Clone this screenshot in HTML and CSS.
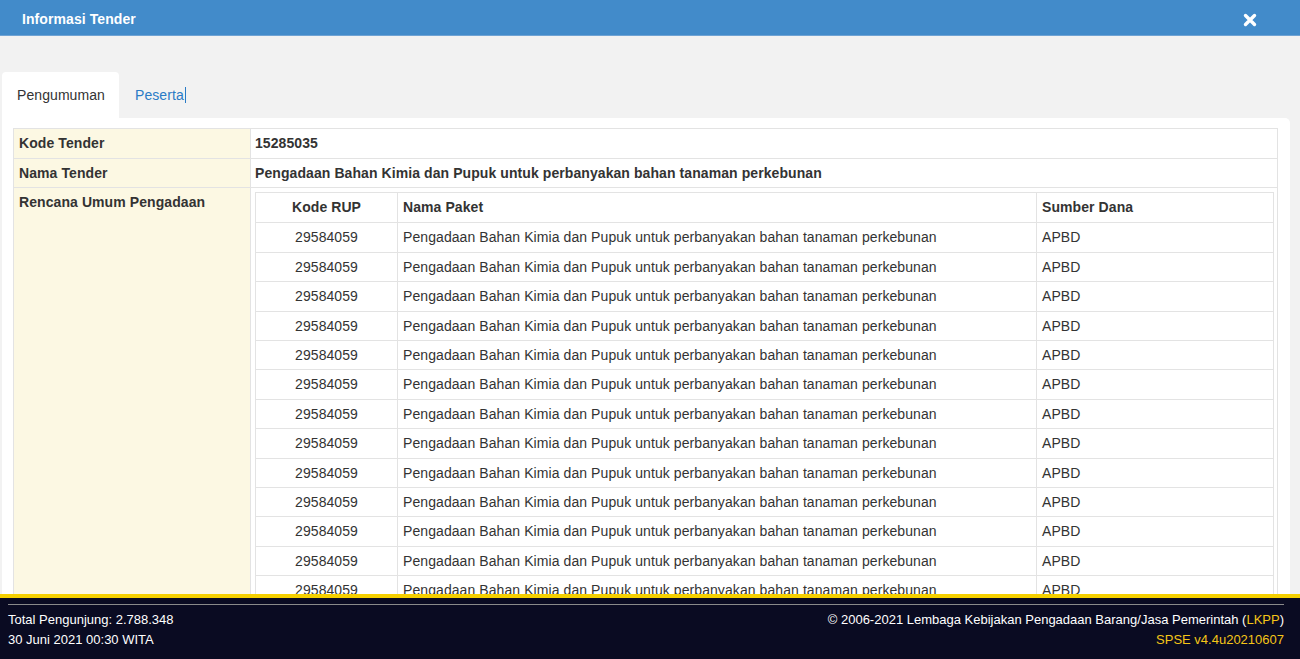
FILE: index.html
```html
<!DOCTYPE html>
<html lang="id">
<head>
<meta charset="utf-8">
<title>Informasi Tender</title>
<link rel="stylesheet" href="styles.css">
</head>
<body>
<div class="modal">
  <div class="modal-header">
    <h4 class="modal-title">Informasi Tender</h4>
    <button class="close" aria-label="Close">
      <svg width="14" height="14" viewBox="0 0 14 14"><path d="M2.5 2.5 L11.5 11.5 M11.5 2.5 L2.5 11.5" stroke="#fff" stroke-width="3.4" stroke-linecap="round"/></svg>
    </button>
  </div>
  <div class="modal-body">
    <ul class="tabs">
      <li class="tab active">Pengumuman</li>
      <li class="tab link">Peserta<span class="caret"></span></li>
    </ul>
    <div class="panel">
      <table class="info">
        <tr><th class="lbl">Kode Tender</th><td class="val"><strong>15285035</strong></td></tr>
        <tr><th class="lbl">Nama Tender</th><td class="val"><strong>Pengadaan Bahan Kimia dan Pupuk untuk perbanyakan bahan tanaman perkebunan</strong></td></tr>
        <tr><th class="lbl">Rencana Umum Pengadaan</th><td class="val nested">
          <table class="rup">
            <tr><th class="c-kode">Kode RUP</th><th class="c-nama">Nama Paket</th><th class="c-dana">Sumber Dana</th></tr>
            <tr><td class="c-kode">29584059</td><td>Pengadaan Bahan Kimia dan Pupuk untuk perbanyakan bahan tanaman perkebunan</td><td>APBD</td></tr>
            <tr><td class="c-kode">29584059</td><td>Pengadaan Bahan Kimia dan Pupuk untuk perbanyakan bahan tanaman perkebunan</td><td>APBD</td></tr>
            <tr><td class="c-kode">29584059</td><td>Pengadaan Bahan Kimia dan Pupuk untuk perbanyakan bahan tanaman perkebunan</td><td>APBD</td></tr>
            <tr><td class="c-kode">29584059</td><td>Pengadaan Bahan Kimia dan Pupuk untuk perbanyakan bahan tanaman perkebunan</td><td>APBD</td></tr>
            <tr><td class="c-kode">29584059</td><td>Pengadaan Bahan Kimia dan Pupuk untuk perbanyakan bahan tanaman perkebunan</td><td>APBD</td></tr>
            <tr><td class="c-kode">29584059</td><td>Pengadaan Bahan Kimia dan Pupuk untuk perbanyakan bahan tanaman perkebunan</td><td>APBD</td></tr>
            <tr><td class="c-kode">29584059</td><td>Pengadaan Bahan Kimia dan Pupuk untuk perbanyakan bahan tanaman perkebunan</td><td>APBD</td></tr>
            <tr><td class="c-kode">29584059</td><td>Pengadaan Bahan Kimia dan Pupuk untuk perbanyakan bahan tanaman perkebunan</td><td>APBD</td></tr>
            <tr><td class="c-kode">29584059</td><td>Pengadaan Bahan Kimia dan Pupuk untuk perbanyakan bahan tanaman perkebunan</td><td>APBD</td></tr>
            <tr><td class="c-kode">29584059</td><td>Pengadaan Bahan Kimia dan Pupuk untuk perbanyakan bahan tanaman perkebunan</td><td>APBD</td></tr>
            <tr><td class="c-kode">29584059</td><td>Pengadaan Bahan Kimia dan Pupuk untuk perbanyakan bahan tanaman perkebunan</td><td>APBD</td></tr>
            <tr><td class="c-kode">29584059</td><td>Pengadaan Bahan Kimia dan Pupuk untuk perbanyakan bahan tanaman perkebunan</td><td>APBD</td></tr>
            <tr><td class="c-kode">29584059</td><td>Pengadaan Bahan Kimia dan Pupuk untuk perbanyakan bahan tanaman perkebunan</td><td>APBD</td></tr>
          </table>
        </td></tr>
      </table>
    </div>
  </div>
</div>
<footer class="footer">
  <div class="footer-line"></div>
  <div class="footer-row">
    <span>Total Pengunjung: 2.788.348</span>
    <span>© 2006-2021 Lembaga Kebijakan Pengadaan Barang/Jasa Pemerintah (<span class="yellow">LKPP</span>)</span>
  </div>
  <div class="footer-row">
    <span>30 Juni 2021 00:30 WITA</span>
    <span class="yellow">SPSE v4.4u20210607</span>
  </div>
</footer>
</body>
</html>
```

FILE: styles.css
```css
html, body {
  margin: 0;
  padding: 0;
  height: 100%;
  overflow: hidden;
}
body {
  font-family: "Liberation Sans", Arial, sans-serif;
  font-size: 14px;
  line-height: 20px;
  color: #333;
  background: #f2f2f2;
}
.modal {
  display: flex;
  flex-direction: column;
  letter-spacing: 0.08px;
}
.modal-header {
  height: 36px;
  background: #428bca;
  display: flex;
  align-items: center;
  justify-content: space-between;
  padding: 2px 43px 0 22px;
  border-bottom: 1px solid #6fa3d4;
  box-sizing: border-box;
}
.modal-title {
  margin: 0;
  color: #fff;
  font-size: 14px;
  font-weight: bold;
  line-height: 20px;
}
.close {
  background: none;
  border: 0;
  padding: 0;
  width: 14px;
  height: 14px;
  display: flex;
  margin-top: 2px;
}
.modal-body {
  padding: 36px 10px 0 2px;
}
.tabs {
  list-style: none;
  margin: 0;
  padding: 0;
  display: flex;
}
.tab {
  padding: 13px 15px 13px 15px;
  line-height: 20px;
  border-radius: 4px 4px 0 0;
}
.tab.active {
  background: #fff;
  color: #333;
  padding-left: 15px;
  padding-right: 14px;
}
.tab.link {
  color: #2a7bc6;
  padding-left: 16px;
  display: flex;
  align-items: center;
}
.caret {
  display: inline-block;
  width: 1px;
  height: 16px;
  background: #2a7bc6;
  margin-left: 1px;
}
.panel {
  background: #fff;
  border-radius: 0 5px 0 0;
  padding: 10px 12px 200px 11px;
}
table {
  border-collapse: collapse;
  border-spacing: 0;
}
.info {
  width: 100%;
  border: 1px solid #e3e3e3;
}
.info > tbody > tr > th,
.info > tbody > tr > td {
  border: 1px solid #e3e3e3;
  padding: 4px 5px 4px 4px;
  line-height: 20.5px;
  vertical-align: top;
  text-align: left;
}
.info > tbody > tr > th.lbl {
  width: 226px;
  background: #fcf8e3;
  font-weight: bold;
  padding-left: 5px;
}
.info > tbody > tr > td.nested {
  padding: 4px 3px 4px 4px;
}
.info .val strong {
  font-weight: bold;
}
.rup {
  width: 100%;
  margin: 0;
}
.rup th,
.rup td {
  border: 1px solid #e3e3e3;
  padding: 4px 5px;
  line-height: 20.4px;
  text-align: left;
  font-weight: normal;
}
.rup th {
  font-weight: bold;
  padding-bottom: 5px;
}
.rup .c-kode {
  width: 131px;
  text-align: center;
}
.rup .c-nama {
  width: 628px;
}
.footer {
  position: fixed;
  left: 0;
  right: 0;
  bottom: 0;
  background: #0a0b22;
  border-top: 4px solid #f5d000;
  padding: 6px 16px 9px 8px;
  color: #fff;
  font-size: 13px;
  line-height: 20px;
}
.footer-line {
  height: 1px;
  background: #8a8a8a;
  margin: 0 0 5px;
}
.footer-row {
  display: flex;
  justify-content: space-between;
}
.yellow {
  color: #f5c518;
}
```
